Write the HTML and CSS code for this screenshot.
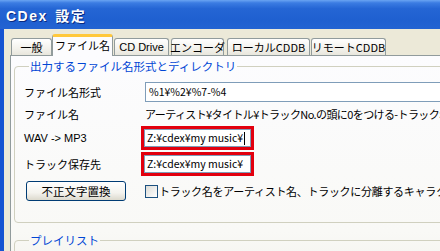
FILE: index.html
```html
<!DOCTYPE html>
<html lang="ja">
<head>
<meta charset="utf-8">
<title>CDex 設定</title>
<link rel="stylesheet" href="styles.css">
</head>
<body>
<div class="window">
  <div class="titlebar"><span class="title">CDex 設定</span></div>
  <div class="frame">
    <div class="tabs">
      <div class="tab t1">一般</div>
      <div class="tab t2 active">ファイル名</div>
      <div class="tab t3">CD Drive</div>
      <div class="tab t4">エンコーダ</div>
      <div class="tab t5">ローカルCDDB</div>
      <div class="tab t6">リモートCDDB</div>
    </div>
    <div class="panel">
      <fieldset class="group">
        <legend>出力するファイル名形式とディレクトリ</legend>
        <div class="row r1">
          <span class="label">ファイル名形式</span>
          <div class="textbox wide">%1¥%2¥%7-%4</div>
        </div>
        <div class="row r2">
          <span class="label">ファイル名</span>
          <span class="value">アーティスト¥タイトル¥トラックNo.の頭に0をつける-トラック名</span>
        </div>
        <div class="row r3">
          <span class="label ascii">WAV -&gt; MP3</span>
          <div class="redbox"><div class="textbox">Z:¥cdex¥my music¥<span class="caret"></span></div></div>
        </div>
        <div class="row r4">
          <span class="label">トラック保存先</span>
          <div class="redbox"><div class="textbox">Z:¥cdex¥my music¥</div></div>
        </div>
        <div class="row r5">
          <div class="btncell"><button class="button">不正文字置換</button></div>
          <span class="check"></span>
          <span class="checklabel">トラック名をアーティスト名、トラックに分離するキャラクタ</span>
        </div>
      </fieldset>
      <fieldset class="group group2">
        <legend>プレイリスト</legend>
      </fieldset>
    </div>
  </div>
</div>
</body>
</html>
```
FILE: styles.css
```css
html, body {
  margin: 0;
  padding: 0;
  width: 440px;
  height: 251px;
  overflow: hidden;
  background: #ece9d8;
}

.window {
  width: 640px;
  height: 251px;
  display: flex;
  flex-direction: column;
  font-family: "Noto Sans CJK JP", sans-serif;
  font-size: 11px;
  color: #000;
}

.titlebar {
  height: 29px;
  flex: none;
  display: flex;
  align-items: center;
  padding-left: 6px;
  background: linear-gradient(#6aa4f2 0%, #3b7ce2 10%, #2465d4 30%, #1f60d0 70%, #2363d2 100%);
}

.title {
  color: #fff;
  font-family: "Liberation Sans", "Noto Sans CJK JP", sans-serif;
  font-weight: bold;
  font-size: 14px;
  letter-spacing: 1.5px;
  word-spacing: 2px;
  text-shadow: 1px 1px 0 #0a2a80;
}

.frame {
  flex: 1;
  border-left: 4px solid #1654d2;
  background: #ece9d8;
  padding: 5px 0 0 6px;
  display: flex;
  flex-direction: column;
}

.tabs {
  display: flex;
  align-items: flex-end;
  height: 21px;
  position: relative;
  z-index: 1;
}

.tab {
  height: 17px;
  box-sizing: border-box;
  border: 1px solid #919b9c;
  border-bottom: none;
  border-radius: 3px 3px 0 0;
  background: linear-gradient(#ffffff, #f3f2ec 60%, #e8e6dc);
  display: flex;
  align-items: center;
  justify-content: center;
  line-height: 13px;
  font-size: 11px;
  white-space: nowrap;
}

.tab.active {
  height: 22px;
  border-top: 3px solid #ffc83c;
  background: #fcfcfe;
  margin-bottom: -1px;
  padding-bottom: 2px;
}

.t1 { margin-left: 1px; width: 41px; }
.t2 { width: 61px; }
.t3 { margin-left: 1px; width: 55px; font-family: "Liberation Sans", "Noto Sans CJK JP", sans-serif; }
.t4 { margin-left: 2px; width: 53px; }
.t5 { margin-left: 3px; width: 83px; }
.t6 { margin-left: 1px; width: 75px; }

.panel {
  flex: 1;
  border: 1px solid #919b9c;
  border-right: none;
  border-bottom: none;
  background: linear-gradient(#fcfcfe, #f9f9f6 80%, #f3f2ed);
  padding: 4px 0 0 3px;
}

.group {
  margin: 0;
  width: 560px;
  border: 1px solid #d0d0bf;
  border-radius: 4px;
  padding: 9px 0 21px 9px;
}

.group legend {
  color: #0046d5;
  padding: 0 1px;
  margin-left: 5px;
  line-height: 13px;
  font-size: 11.5px;
}

.row {
  display: flex;
  align-items: center;
}

.r1 { height: 20px; }
.r2 { height: 24px; }
.r3 { height: 24px; }
.r4 { height: 24px; margin-top: 2px; }
.r5 { height: 20px; margin-top: 5px; }

.label {
  width: 117px;
  flex: none;
  line-height: 13px;
}

.label.ascii {
  font-family: "Liberation Sans", sans-serif;
  font-size: 11px;
}

.textbox {
  box-sizing: border-box;
  height: 100%;
  border: 1px solid #7f9db9;
  background: #fff;
  display: flex;
  align-items: center;
  padding-left: 3px;
  font-size: 10.5px;
  line-height: 12px;
  white-space: nowrap;
}

.textbox.wide {
  width: 400px;
  margin-left: 4px;
  height: 20px;
}

.value {
  margin-left: 4px;
  white-space: nowrap;
  letter-spacing: -0.6px;
  line-height: 13px;
}

.redbox {
  box-sizing: border-box;
  width: 113px;
  height: 24px;
  border: 3px solid #e2000e;
  flex: none;
}

.redbox .textbox {
  padding-left: 2px;
}

.caret {
  display: inline-block;
  width: 1px;
  height: 13px;
  background: #000;
  margin-left: 1px;
}

.btncell {
  width: 117px;
  flex: none;
  height: 20px;
}

.button {
  margin: 0 0 0 2px;
  width: 100px;
  height: 20px;
  box-sizing: border-box;
  border: 1px solid #003c74;
  border-radius: 3px;
  background: linear-gradient(#ffffff, #f4f3ee 60%, #dcd9cd);
  font-family: "Noto Sans CJK JP", sans-serif;
  font-size: 11.5px;
  line-height: 13px;
  padding: 0;
  color: #000;
}

.check {
  flex: none;
  width: 13px;
  height: 13px;
  box-sizing: border-box;
  border: 1px solid #1c5180;
  background: linear-gradient(135deg, #dcdcd7, #ffffff);
  margin-left: 4px;
  margin-right: 1px;
}

.checklabel {
  white-space: nowrap;
  line-height: 13px;
  letter-spacing: -0.3px;
}

.group2 {
  margin-top: 11px;
  height: 40px;
  padding: 0 0 0 9px;
}
```
